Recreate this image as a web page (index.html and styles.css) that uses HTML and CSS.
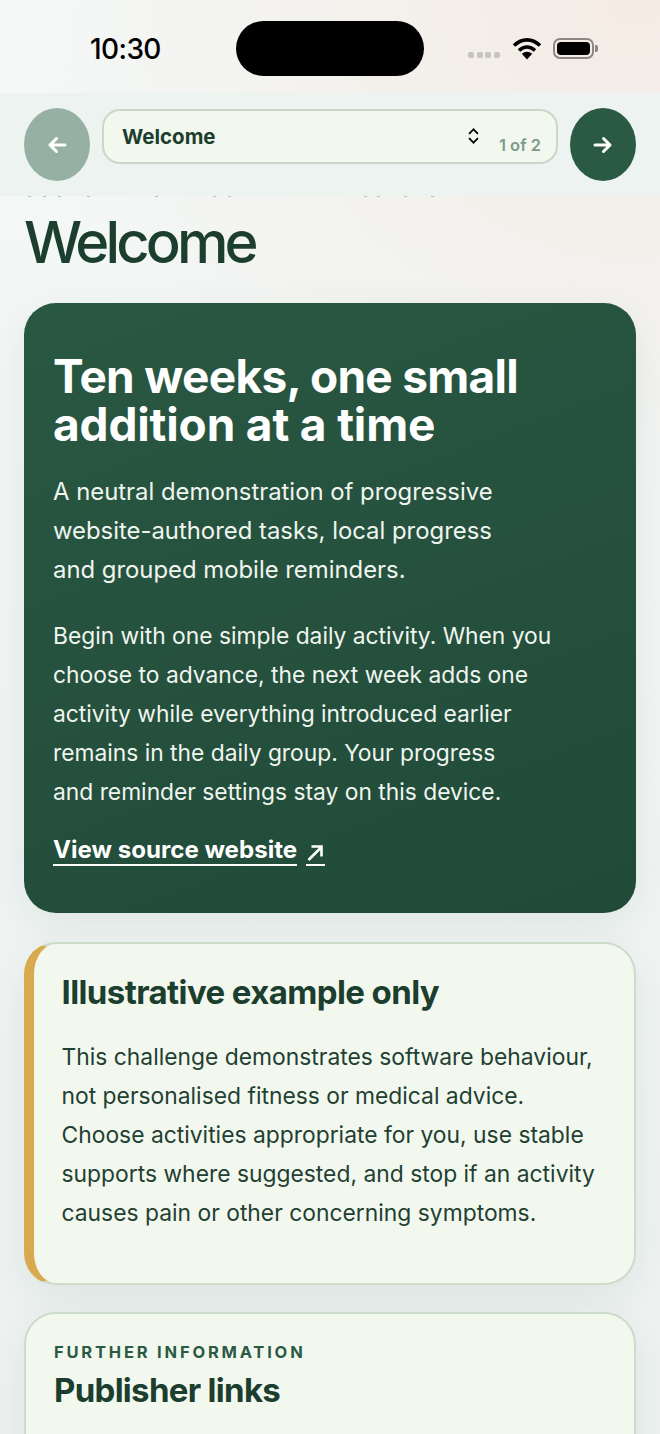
FILE: index.html
```html
<!DOCTYPE html>
<html lang="en">
<head>
<meta charset="utf-8">
<title>Welcome</title>
<link rel="stylesheet" href="styles.css">
</head>
<body>
<div class="page">
  <header class="status">
    <span class="time">10:30</span>
    <span class="island"></span>
    <div class="status-icons">
      <span class="dots"><i></i><i></i><i></i><i></i></span>
      <svg class="wifi" viewBox="0 0 30 23" width="30" height="23"><path d="M2 8.500C10 1 20 1 28 8.500" fill="none" stroke="#000" stroke-width="3.600"/><path d="M7 13.500C12 9 18 9 23 13.500" fill="none" stroke="#000" stroke-width="3.600"/><path d="M9.800 16.800C13 14 17 14 20.200 16.800L15 22.500Z" fill="#000"/></svg>
      <span class="battery"><span class="battery-fill"></span></span>
      <span class="battery-cap"></span>
    </div>
  </header>
  <nav class="nav">
    <button class="round prev" type="button"><svg viewBox="0 0 24 24" width="24" height="24"><path d="M20 12H5M11.500 5.500L5 12l6.500 6.500" fill="none" stroke="#fff" stroke-width="3" stroke-linecap="round" stroke-linejoin="round"/></svg></button>
    <div class="picker">
      <span class="picker-label">Welcome</span>
      <svg class="chevrons" viewBox="0 0 14 18" width="13" height="16"><path d="M2 6.500L7 1.500l5 5M2 11.500l5 5 5-5" fill="none" stroke="#000" stroke-width="2"/></svg>
      <span class="count">1 of 2</span>
    </div>
    <button class="round next" type="button"><svg viewBox="0 0 24 24" width="24" height="24"><path d="M4 12H19M12.500 5.500L19 12l-6.500 6.500" fill="none" stroke="#fff" stroke-width="3" stroke-linecap="round" stroke-linejoin="round"/></svg></button>
  </nav>
  <main class="content">
    <svg class="clipped" viewBox="0 0 440 1" width="440" height="1"><path d="M4 0h3v1H4zM19 0h3v1h-3zM34 0h3v1h-3zM63 0h3v1h-3zM131 0h3v1h-3zM189 0h3v1h-3zM204 0h3v1h-3zM340 0h3v1h-3zM353 0h3v1h-3zM380 0h3v1h-3zM407 0h3v1h-3z" fill="#a9c2b4"/></svg>
    <h1 class="title">Welcome</h1>
    <section class="hero">
      <h2 class="hero-title">Ten weeks, one small<br><span class="hero-title-second">addition at a time</span></h2>
      <p class="hero-lead">A neutral demonstration of progressive<br>website-authored tasks, local progress<br>and grouped mobile reminders.</p>
      <p class="hero-body">Begin with one simple daily activity. When you<br>choose to advance, the next week adds one<br>activity while everything introduced earlier<br>remains in the daily group. Your progress<br>and reminder settings stay on this device.</p>
      <a class="source" href="#"><span class="source-text">View source website</span><span class="source-arrow"><svg viewBox="0 0 18 18" width="18" height="18"><path d="M2.500 16L15.500 3M5.500 2.500H15.500V12.500" fill="none" stroke="#fff" stroke-width="2.600"/></svg></span></a>
    </section>
    <section class="notice">
      <h2 class="notice-title">Illustrative example only</h2>
      <p class="notice-body">This challenge demonstrates software behaviour,<br>not personalised fitness or medical advice.<br>Choose activities appropriate for you, use stable<br>supports where suggested, and stop if an activity<br>causes pain or other concerning symptoms.</p>
    </section>
    <section class="links">
      <p class="eyebrow">FURTHER INFORMATION</p>
      <h2 class="links-title">Publisher links</h2>
    </section>
  </main>
</div>
</body>
</html>
```
FILE: styles.css
```css
* { box-sizing: border-box; }
html, body { margin: 0; padding: 0; height: 100%; }
body { font-family: Inter, "Liberation Sans", sans-serif; overflow: hidden; }
.page {
  width: 660px; height: 1434px; overflow: hidden;
  background:
    radial-gradient(ellipse 620px 520px at 640px 0, #f4ebe4 0%, rgba(244,235,228,0) 100%),
    linear-gradient(180deg, #f4f8f7 0%, #edf2f1 100%);
}
.status { height: 93px; display: flex; align-items: flex-start; position: relative; }
.time { position: absolute; left: 90px; top: 32px; font-size: 28px; line-height: 34px; font-weight: 500; color: #000; letter-spacing: -0.6px; }
.island { position: absolute; left: 236px; top: 21px; width: 188px; height: 55px; border-radius: 28px; background: #000; }
.status-icons { position: absolute; left: 468px; top: 37px; width: 132px; height: 24px; }
.dots { position: absolute; left: 0; top: 15px; display: flex; gap: 2.500px; }
.dots i { width: 6px; height: 6px; border-radius: 2px; background: #c4c4c2; display: block; }
.wifi { position: absolute; left: 44px; top: 0; }
.battery { position: absolute; left: 85px; top: 1px; width: 41px; height: 21px; border: 2px solid #8b8783; border-radius: 7px; padding: 2px; }
.battery-fill { display: block; width: 100%; height: 100%; border-radius: 4px; background: #000; }
.battery-cap { position: absolute; left: 127px; top: 8px; width: 2.500px; height: 7px; border-radius: 0 2px 2px 0; background: #8b8783; }

.nav { height: 103px; background: #edf3f1; display: flex; align-items: flex-start; gap: 12px; padding: 15px 24px 0; }
.round { width: 66px; height: 73px; border: 0; border-radius: 50%; padding: 0; display: flex; align-items: center; justify-content: center; flex: none; }
.prev { background: #96b0a4; }
.next { background: #2a5a44; }
.picker { flex: 1; height: 55px; margin-top: 1px; border: 2px solid #c7d8c6; border-radius: 18px; background: #f3f8ee; position: relative; display: flex; }
.picker-label { position: absolute; left: 18px; top: 13px; font-size: 20.500px; line-height: 25px; font-weight: 700; color: #1b3e2f; }
.chevrons { position: absolute; left: 363px; top: 17px; }
.count { position: absolute; right: 15px; top: 25px; font-size: 16.500px; line-height: 19px; font-weight: 600; color: #7f9a8c; }

.content { padding: 0 24px; }
.clipped { display: block; }
.title { margin: 10px 0 0; font-size: 58px; line-height: 70px; font-weight: 500; letter-spacing: -3.900px; color: #1b3e2f; }
.hero {
  margin-top: 26px; height: 610px; padding: 49px 29px 0; border-radius: 32px; color: #fff;
  background: linear-gradient(160deg, #295842 0%, #214a39 100%);
  box-shadow: 0 12px 40px rgba(27,62,47,.08);
}
.hero-title { margin: 0; font-size: 46px; line-height: 48px; font-weight: 700; letter-spacing: -0.700px; white-space: nowrap; }
.hero-title-second { letter-spacing: -0.150px; }
.hero-lead { margin: 24px 0 0; font-size: 23.860px; line-height: 39px; color: #f0f5ef; white-space: nowrap; }
.hero-body { margin: 27px 0 0; font-size: 22.800px; line-height: 39px; color: #f0f5ef; white-space: nowrap; }
.source { display: flex; align-items: flex-start; gap: 9px; margin-top: 24px; color: #fff; text-decoration: none; font-size: 24.100px; font-weight: 700; }
.source-text { line-height: 30px; border-bottom: 2px solid #fff; height: 31px; white-space: nowrap; }
.source-arrow { height: 31px; width: 19px; border-bottom: 2px solid #fff; padding-top: 4px; display: block; }
.notice {
  margin-top: 29px; height: 343px; padding: 28px 30px 0 27.500px; border-radius: 32px;
  border: 2px solid #cddbcb; border-left: 10px solid #d9a94f; background: #f3f8ee; color: #1b3e2f;
  box-shadow: 0 12px 40px rgba(27,62,47,.08);
}
.notice-title { margin: 0; font-size: 33px; line-height: 40px; font-weight: 700; letter-spacing: -0.600px; white-space: nowrap; }
.notice-body { margin: 26px 0 0; font-size: 22.850px; line-height: 39px; color: #1f4033; white-space: nowrap; }
.links {
  margin-top: 27px; height: 200px; padding: 28px 28px 0; border-radius: 32px;
  border: 2px solid #cddbcb; background: #f3f8ee;
  box-shadow: 0 12px 40px rgba(27,62,47,.08);
}
.eyebrow { margin: 0; font-size: 16.500px; line-height: 20px; font-weight: 700; letter-spacing: 2.800px; color: #2a5a44; }
.links-title { margin: 8px 0 0; font-size: 33px; line-height: 40px; font-weight: 700; letter-spacing: -0.700px; color: #1b3e2f; }
```
